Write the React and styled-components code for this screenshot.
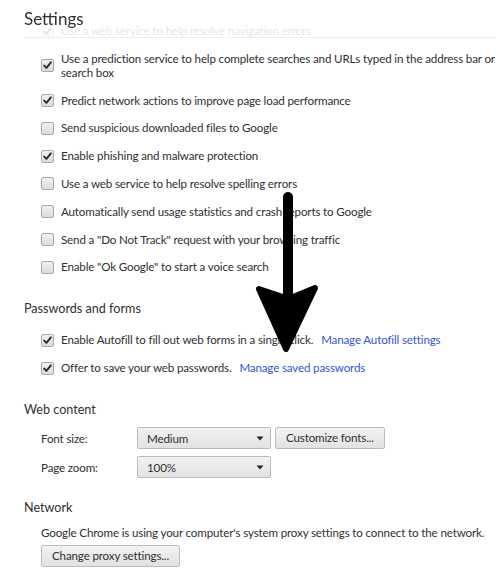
import React from "react";
import styled, { createGlobalStyle } from "styled-components";

const Global = createGlobalStyle`
  html, body { margin: 0; padding: 0; background: #fff; }
  body { overflow: hidden; width: 496px; height: 582px; }
  #root { position: relative; }
`;

const FONT = `Lato, "Open Sans", "DejaVu Sans", sans-serif`;

const Page = styled.div`
  position: relative;
  width: 640px;
  padding-top: 24px;
  font-family: ${FONT};
  font-size: 11.6px;
  letter-spacing: -0.15px;
  color: #303030;
`;

const Header = styled.header`
  position: fixed;
  top: 0;
  left: 0;
  right: 0;
  height: 38px;
  padding-left: 24px;
  background: rgba(255, 255, 255, 0.88);
  z-index: 2;
`;

const HeaderInner = styled.div`
  height: 38px;
  border-bottom: 1px solid #eeeeee;
  box-sizing: border-box;
  display: flex;
  align-items: flex-start;
`;

const Title = styled.h1`
  margin: 0;
  font-family: ${FONT};
  font-weight: normal;
  font-size: 17px;
  letter-spacing: 0;
  line-height: 37px;
  color: #303030;
`;

const Section = styled.section`
  padding-left: 24px;
  margin-bottom: ${(p) => (p.$gap ? p.$gap : 20)}px;
`;

const SectionTitle = styled.h3`
  margin: 0 0 ${(p) => (p.$mb ? p.$mb : 8)}px;
  font-weight: normal;
  font-size: 12.6px;
  letter-spacing: 0;
  line-height: 18px;
  color: #303030;
`;

const Rows = styled.div`
  display: flex;
  flex-direction: column;
  gap: 13.8px;
  padding: ${(p) => (p.$first ? "0" : "7px")} 0 6px 17px;
`;

const Row = styled.label`
  display: flex;
  align-items: center;
  gap: 7px;
  line-height: 14px;
`;

const Box = styled.span`
  flex: none;
  width: 13px;
  height: 13px;
  box-sizing: border-box;
  border: 1px solid #a9a9a9;
  border-radius: 2px;
  background: linear-gradient(#f0f0f0, #dcdcdc);
  display: flex;
  align-items: center;
  justify-content: center;
`;

const Text = styled.span`
  max-width: 525px;
`;

const Link = styled.a`
  color: #3256cf;
  text-decoration: none;
  margin-left: 5px;
`;

const Checkbox = ({ checked }) => (
  <Box>
    {checked && (
      <svg width="11" height="11" viewBox="0 0 11 11">
        <path d="M2.2 5.6 L4.4 7.9 L8.9 2.4" fill="none" stroke="#2e2e2e" strokeWidth="2" strokeLinejoin="round" strokeLinecap="round" />
      </svg>
    )}
  </Box>
);

const FieldRow = styled.div`
  display: flex;
  align-items: center;
  gap: 4px;
  height: 22px;
`;

const FieldLabel = styled.span`
  width: 92px;
  flex: none;
`;

const Select = styled.div`
  width: 134px;
  height: 22px;
  box-sizing: border-box;
  border: 1px solid #bdbdbd;
  border-radius: 2px;
  background: linear-gradient(#f2f2f2, #e2e2e2);
  display: flex;
  align-items: center;
  justify-content: space-between;
  padding: 0 6px 0 9px;
  color: #303030;
`;

const Button = styled.button`
  height: 22px;
  box-sizing: border-box;
  border: 1px solid #bdbdbd;
  border-radius: 2px;
  background: linear-gradient(#f2f2f2, #e2e2e2);
  padding: 0 10px;
  font-family: ${FONT};
  font-size: 11.6px;
  letter-spacing: -0.15px;
  color: #303030;
  line-height: 20px;
`;

const Fields = styled.div`
  display: flex;
  flex-direction: column;
  gap: 7px;
  padding-left: 17px;
`;

const Para = styled.div`
  padding-left: 17px;
  display: flex;
  flex-direction: column;
  align-items: flex-start;
  gap: 5px;
  line-height: 14px;
`;

const Caret = () => (
  <svg width="8" height="5" viewBox="0 0 8 5">
    <path d="M0.5 0.5 H7.5 L4 4.5 Z" fill="#222" />
  </svg>
);

const Arrow = styled.svg`
  position: absolute;
  left: 250px;
  top: 185px;
  z-index: 1;
  pointer-events: none;
`;

const privacy = [
  [true, "Use a prediction service to help complete searches and URLs typed in the address bar or the app launcher search box"],
  [true, "Predict network actions to improve page load performance"],
  [false, "Send suspicious downloaded files to Google"],
  [true, "Enable phishing and malware protection"],
  [false, "Use a web service to help resolve spelling errors"],
  [false, "Automatically send usage statistics and crash reports to Google"],
  [false, 'Send a "Do Not Track" request with your browsing traffic'],
  [false, 'Enable "Ok Google" to start a voice search'],
];

export default function App() {
  return (
    <>
      <Global />
      <Page>
        <Header>
          <HeaderInner>
            <Title>Settings</Title>
          </HeaderInner>
        </Header>

        <Section>
          <Rows $first>
            <Row>
              <Checkbox checked />
              <Text>Use a web service to help resolve navigation errors</Text>
            </Row>
            {privacy.map(([c, t]) => (
              <Row key={t}>
                <Checkbox checked={c} />
                <Text>{t}</Text>
              </Row>
            ))}
          </Rows>
        </Section>

        <Section>
          <SectionTitle>Passwords and forms</SectionTitle>
          <Rows>
            <Row>
              <Checkbox checked />
              <Text>
                Enable Autofill to fill out web forms in a single click.{" "}
                <Link>Manage Autofill settings</Link>
              </Text>
            </Row>
            <Row>
              <Checkbox checked />
              <Text>
                Offer to save your web passwords.{" "}
                <Link>Manage saved passwords</Link>
              </Text>
            </Row>
          </Rows>
        </Section>

        <Section $gap={21}>
          <SectionTitle>Web content</SectionTitle>
          <Fields>
            <FieldRow>
              <FieldLabel>Font size:</FieldLabel>
              <Select>
                <span>Medium</span>
                <Caret />
              </Select>
              <Button>Customize fonts...</Button>
            </FieldRow>
            <FieldRow>
              <FieldLabel>Page zoom:</FieldLabel>
              <Select>
                <span>100%</span>
                <Caret />
              </Select>
            </FieldRow>
          </Fields>
        </Section>

        <Section>
          <SectionTitle $mb={9}>Network</SectionTitle>
          <Para>
            <span>Google Chrome is using your computer's system proxy settings to connect to the network.</span>
            <Button>Change proxy settings...</Button>
          </Para>
        </Section>

        <Arrow width="80" height="175" viewBox="0 0 80 175">
          <line x1="38" y1="12" x2="38" y2="112" stroke="#000" strokeWidth="10" strokeLinecap="round" />
          <polygon points="9,104 33,112 43,112 65,103 36,164" fill="#000" stroke="#000" strokeWidth="6" strokeLinejoin="round" />
        </Arrow>
      </Page>
    </>
  );
}
